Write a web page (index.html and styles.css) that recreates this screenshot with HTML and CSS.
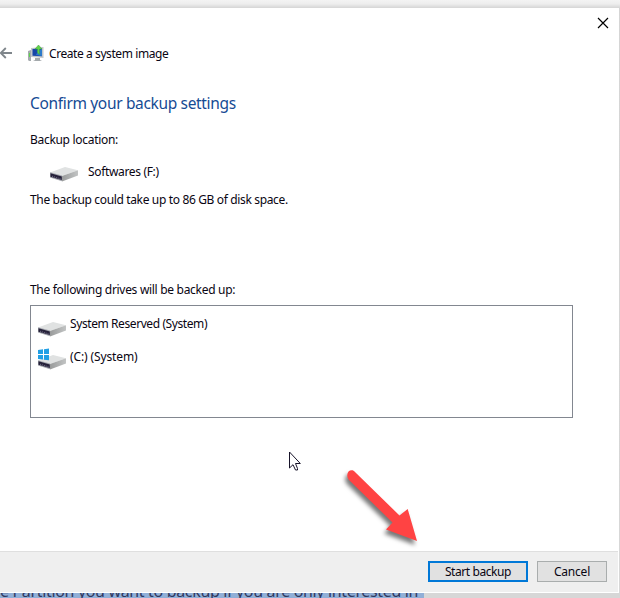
FILE: index.html
```html
<!DOCTYPE html>
<html lang="en">
<head>
<meta charset="utf-8">
<title>Create a system image</title>
<link rel="stylesheet" href="styles.css">
</head>
<body>
<svg class="defs" width="0" height="0" aria-hidden="true">
  <defs>
    <linearGradient id="side" x1="0" x2="1"><stop offset="0" stop-color="#999b9b"/><stop offset="1" stop-color="#c2c4c4"/></linearGradient>
    <symbol id="drive" viewBox="0 0 28 16">
      <path d="M0 6.5 15 1 28 4.2 12 10Z" fill="#e0e2e2"/>
      <path d="M12 10 28 4.2V9.5L12 15.5Z" fill="url(#side)"/>
      <path d="M0 6.2 12 9.6V15.3L0 11.5Z" fill="#a3a6ad"/>
      <path d="M.5 7.2 11.8 10.5V14L.5 10.8Z" fill="#252039"/>
      <path d="M2 10.2 10.5 12.8" stroke="#77758d" stroke-width="1" stroke-dasharray="1 1"/>
    </symbol>
  </defs>
</svg>
<main class="window">
  <div class="content">
    <header class="titlebar">
      <svg class="back" width="12" height="12" viewBox="0 0 12 12"><path d="M12 6H1M5.8 1 .8 6l5 5" fill="none" stroke="#7f868b" stroke-width="1.8"/></svg>
      <svg class="app-icon" width="16" height="17" viewBox="0 0 16 17">
        <path d="M0 6 3 5V16H1L0 15Z" fill="#a5abae"/><path d="M1 8H2V12H1Z" fill="#5ed34d"/>
        <path d="M3 3 15.5 2V13L3 12Z" fill="#c3c7ca"/><path d="M4.5 4 14 3.5V11.3L4.5 10.8Z" fill="#1646a8"/>
        <path d="M10 6 14 4V11L8 10Z" fill="#2d7acc"/>
        <path d="M7 13H12V15L14 16H5L7 15Z" fill="#a4a9ac"/>
        <path d="M11.8 9.5C9.5 9 9 7 9.5 4H7L10.5 0 14 4H11.7C11.2 6.2 11.4 8 11.8 9.5Z" fill="#60d448" stroke="#449845" stroke-width=".5"/>
      </svg>
      <span class="app-name">Create a system image</span>
      <svg class="close" width="12" height="12" viewBox="0 0 12 12"><path d="M1 1 11 11M11 1 1 11" stroke="#000" stroke-width="1.2"/></svg>
    </header>
    <h1>Confirm your backup settings</h1>
    <p class="label-location">Backup location:</p>
    <div class="location"><svg width="28" height="16"><use href="#drive"/></svg><span class="location-name">Softwares (F:)</span></div>
    <p class="size-note">The backup could take up to 86 GB of disk space.</p>
    <p class="label-drives">The following drives will be backed up:</p>
    <ul class="drives">
      <li><svg width="28" height="22" viewBox="0 0 28 22"><use href="#drive" y="6" width="28" height="16"/></svg><span class="reserved">System Reserved (System)</span></li>
      <li><svg width="28" height="22" viewBox="0 0 28 22"><use href="#drive" y="6" width="28" height="16"/><path d="M0 2 5 1.3V6H0ZM6 1.2 11 .5V6H6ZM0 7H5V11.5L0 11ZM6 7H11V12.3L6 11.7Z" fill="#219fe5"/></svg><span class="system">(C:) (System)</span></li>
    </ul>
  </div>
  <footer class="actions">
    <button class="primary"><span>Start backup</span></button>
    <button class="cancel"><span>Cancel</span></button>
  </footer>
</main>
<div class="behind"><span class="selected">e Partition you want to backup if you are only interested in</span></div>
<svg class="pointer" width="14" height="21" viewBox="0 0 14 21"><path d="M1.5 1V17L5 13.7 7.5 19H9.5V17.5L7.5 12.5H12.3Z" fill="#fff" stroke="#171329"/></svg>
<svg class="arrow" width="90" height="100" viewBox="0 0 90 100"><path d="M15.5 17.4 59.5 60.5 67.7 54 77 86 46 74.5 52.5 67.5 9 25C4 18 11 12 15.5 17.4Z" fill="#ff4343"/></svg>
</body>
</html>
```
FILE: styles.css
```css
* { box-sizing: border-box; }
body {
  margin: 0;
  width: 620px;
  height: 598px;
  overflow: hidden;
  padding-top: 8px;
  background: linear-gradient(#f3f3f3 0, #ededed 4px, #d5d5d5 8px, #d7d7d7 100%);
  font: 12px/16px "Noto Sans", "Open Sans", sans-serif;
  color: #090512;
}
.defs { position: absolute; }
svg { display: block; flex: none; }
h1, p, ul { margin: 0; padding: 0; }
span, h1, p { white-space: nowrap; }
.window {
  width: 619px;
  height: 585px;
  background: #fff;
  border-right: 1px solid #fff;
  border-bottom: 1px solid #fff;
  display: flex;
  flex-direction: column;
}
.content { height: 543px; padding-left: 30px; }
.titlebar { height: 68px; margin-left: -30px; padding-top: 9px; display: flex; }
.back { margin-top: 30px; }
.app-icon { margin: 28px 0 0 16px; }
.app-name { margin: 29px 0 0 5px; letter-spacing: -.42px; }
.close { margin-left: auto; margin-right: 9px; }
h1 { margin-top: 16px; height: 23px; font-size: 15.5px; line-height: 22px; font-weight: 400; color: #164b94; letter-spacing: -.34px; }
.label-location { margin-top: 17px; letter-spacing: -.3px; }
.location { display: flex; align-items: center; height: 18px; margin: 16px 0 0 20px; }
.location-name { margin: -3px 0 0 10px; letter-spacing: -.34px; }
.location svg { margin-top: 1px; }
.size-note { margin-top: 10px; letter-spacing: -.35px; }
.label-drives { margin-top: 74px; letter-spacing: -.3px; }
.drives {
  list-style: none;
  width: 543px;
  height: 113px;
  margin-top: 7px;
  padding: 8px 7px;
  border: 1px solid #828790;
}
.drives li { display: flex; height: 33px; gap: 4px; }
.drives svg { margin-top: 1px; }
.drives span { margin-top: 2px; letter-spacing: -.41px; }
.drives .system { letter-spacing: -.12px; }
.actions {
  height: 41px;
  background: #efefef;
  border-top: 1px solid #dfdfdf;
  padding: 9px 11px 0 0;
  display: flex;
  justify-content: flex-end;
  gap: 9px;
}
button {
  font: inherit;
  color: inherit;
  height: 21px;
  padding: 0;
  background: #e1e1e1;
  border: 1px solid #a9adad;
  line-height: 18px;
  letter-spacing: -.2px;
}
.primary { width: 100px; border: 2px solid #0078d7; line-height: 16px; letter-spacing: -.42px; }
.cancel { width: 70px; }
.behind {
  height: 5px;
  overflow: hidden;
  display: flex;
  align-items: flex-end;
}
.selected {
  width: 424px;
  height: 24px;
  background: #91afd7;
  color: #30395f;
  font: 16px/24px "Noto Sans", sans-serif;
  letter-spacing: -.34px;
  margin-bottom: -5px;
}
.pointer { position: absolute; left: 288px; top: 451px; }
.arrow { position: absolute; left: 340px; top: 455px; filter: drop-shadow(-2px 4px 2px #0008); }
```
